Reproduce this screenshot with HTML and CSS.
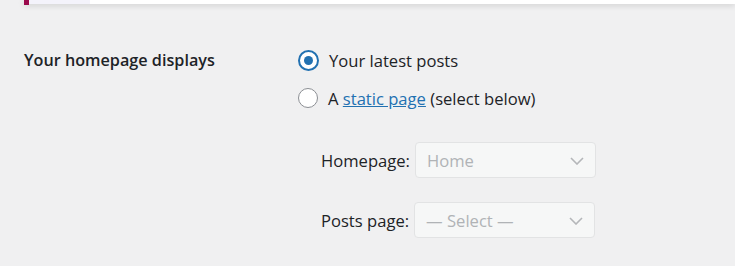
FILE: index.html
```html
<!DOCTYPE html>
<html>
<head>
<meta charset="utf-8">
<link rel="stylesheet" href="styles.css">
</head>
<body>
<div class="topbar"><span class="accent"></span><span class="tab"></span></div>
<div class="row">
  <div class="th">Your homepage displays</div>
  <div class="td">
    <label class="radio"><span class="dot checked"></span>Your latest posts</label>
    <label class="radio"><span class="dot"></span>A&nbsp;<a href="#">static page</a>&nbsp;(select below)</label>
    <div class="sub">
      <div class="field"><span class="flabel">Homepage:</span><span class="select sel1">Home<svg class="chev" width="14" height="8" viewBox="0 0 14 8"><path d="M1 1l6 6 6-6" fill="none" stroke="#b4b6b9" stroke-width="1.6"/></svg></span></div>
      <div class="field f2"><span class="flabel">Posts page:</span><span class="select sel2">— Select —<svg class="chev" width="14" height="8" viewBox="0 0 14 8"><path d="M1 1l6 6 6-6" fill="none" stroke="#b4b6b9" stroke-width="1.6"/></svg></span></div>
    </div>
  </div>
</div>
</body>
</html>
```
FILE: styles.css
```css
html, body { margin: 0; padding: 0; }
body {
  background: #f0f0f1;
  font-family: "Open Sans", "Noto Sans", sans-serif;
  color: #1d2327;
  font-size: 16.6px;
  width: 735px;
  height: 266px;
  overflow: hidden;
}
.topbar {
  margin-left: 24px;
  height: 4px;
  background: #fff;
  box-shadow: 0 1px 6px rgba(0,0,0,0.18);
  display: flex;
}
.accent { width: 5px; height: 5px; background: #9b0a4c; }
.tab { width: 61px; height: 4px; background: #f4f3fb; }
.row { display: flex; padding-top: 44px; }
.th {
  width: 274px;
  padding-left: 24px;
  font-weight: 600;
  font-size: 16.2px;
  line-height: 24px;
}
.td { display: flex; flex-direction: column; }
.radio { display: flex; align-items: center; height: 24px; margin-bottom: 14px; }
.dot {
  width: 18px; height: 18px;
  border: 1.5px solid #8c8f94;
  border-radius: 50%;
  background: #fff;
  margin-right: 10px;
  position: relative;
  box-sizing: content-box;
}
.dot.checked { border: 2px solid #2271b1; width: 17px; height: 17px; }
.dot.checked::after {
  content: ""; position: absolute; left: 4px; top: 4px;
  width: 9px; height: 9px; border-radius: 50%; background: #2271b1;
}
a { color: #2271b1; text-decoration: underline; }
.sub { padding-left: 23px; padding-top: 18px; display: flex; flex-direction: column; gap: 24px; }
.field { display: flex; align-items: center; }
.flabel { margin-right: 5px; }
.select {
  display: flex; align-items: center; justify-content: space-between;
  height: 36px; box-sizing: border-box;
  border: 1px solid #e2e3e4;
  border-radius: 4px;
  background: #f6f7f7;
  color: #b0b3b6;
  padding: 0 11px 0 11px;
}
.sel1 { width: 181px; }
.sel2 { width: 181px; }
.chev { margin-top: 1px; }
```
